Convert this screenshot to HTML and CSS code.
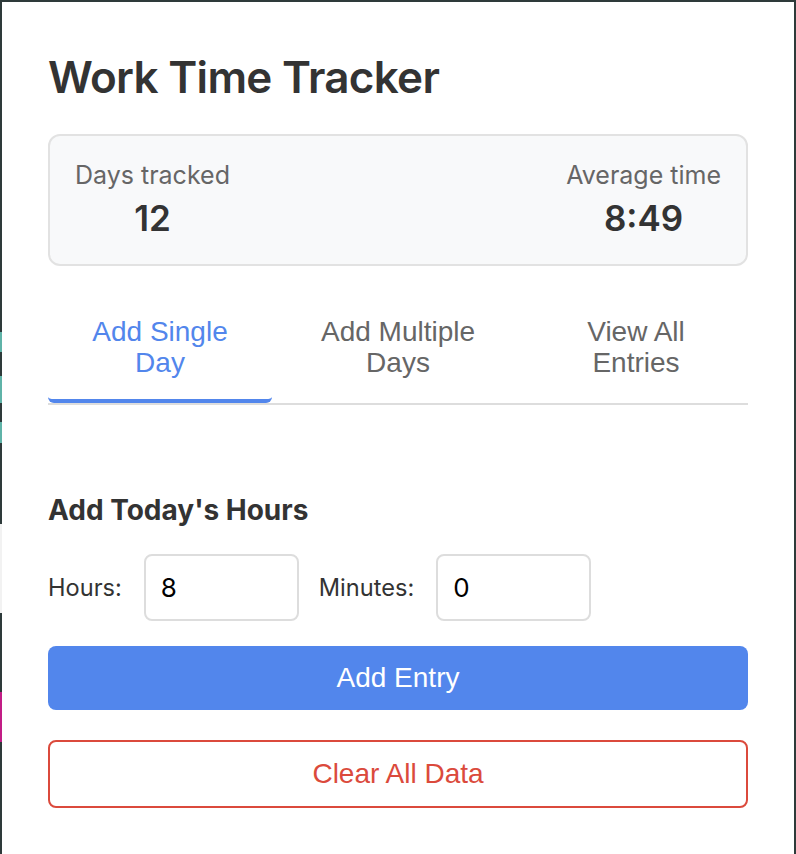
FILE: index.html
```html
<!DOCTYPE html>
<html lang="en">
<head>
  <meta charset="UTF-8" />
  <meta name="viewport" content="width=device-width, initial-scale=1.0"/>
  <title>Work Time Tracker</title>
  <link rel="stylesheet" href="styles.css">
</head>
<body>
  <div class="window">
    <div class="container">
      <h1>Work Time Tracker</h1>

      <div class="stats">
        <div class="stat">
          <div class="stat-label">Days tracked</div>
          <div class="stat-value" id="days">12</div>
        </div>
        <div class="stat">
          <div class="stat-label">Average time</div>
          <div class="stat-value" id="average">8:49</div>
        </div>
      </div>

      <div class="tabs">
        <button class="tab active">Add Single Day</button>
        <button class="tab">Add Multiple Days</button>
        <button class="tab">View All Entries</button>
      </div>

      <h2>Add Today's Hours</h2>

      <div class="time-row">
        <label for="hours">Hours:</label>
        <input type="number" id="hours" value="8"/>
        <label for="minutes">Minutes:</label>
        <input type="number" id="minutes" value="0"/>
      </div>

      <button class="btn-primary">Add Entry</button>
      <button class="btn-danger">Clear All Data</button>
    </div>
  </div>
</body>
</html>
```

FILE: styles.css
```css
body {
  margin: 0;
  background: #fff;
  font-family: Inter, "Noto Sans", sans-serif;
  color: #333;
}
.window {
  min-height: 852px;
  border-top: 2px solid #2e3a3a;
  border-right: 2px solid #2e3a3a;
  padding-left: 2px;
  background: linear-gradient(to bottom,
    #2e3a3a 0, #2e3a3a 330px,
    #5fb3a8 330px, #5fb3a8 350px,
    #2e3a3a 350px, #2e3a3a 374px,
    #5fb3a8 374px, #5fb3a8 401px,
    #2e3a3a 401px, #2e3a3a 420px,
    #5fb3a8 420px, #5fb3a8 441px,
    #2e3a3a 441px, #2e3a3a 522px,
    #f2f2f2 522px, #f2f2f2 611px,
    #2e3a3a 611px, #2e3a3a 690px,
    #c21d86 690px, #c21d86 740px,
    #2e3a3a 740px) no-repeat left top / 2px 100%;
}
.container {
  background: #fff;
  padding: 46px 46px 0;
}
h1 {
  margin: 0 0 28px;
  font-size: 44px;
  font-weight: 600;
  line-height: 58px;
  letter-spacing: -0.7px;
  color: #333;
}
.stats {
  display: flex;
  justify-content: space-between;
  background: #f8f9fa;
  border: 2px solid #e2e2e2;
  border-radius: 12px;
  padding: 25px 25px 25px;
  margin-bottom: 33px;
}
.stat {
  text-align: center;
}
.stat-label {
  font-size: 25px;
  line-height: 29px;
  color: #666;
}
.stat-value {
  margin-top: 8px;
  font-size: 35px;
  line-height: 41px;
  font-weight: 600;
  color: #333;
}
.tabs {
  display: flex;
  gap: 14px;
  border-bottom: 2px solid #ddd;
}
.tab {
  flex: 1;
  background: none;
  border: none;
  border-bottom: 4px solid transparent;
  border-radius: 6px;
  padding: 17px 24px 21px;
  font-family: "Liberation Sans", Arial, sans-serif;
  font-size: 28px;
  line-height: 31px;
  color: #666;
}
.tab.active {
  color: #5286ec;
  border-bottom-color: #5286ec;
}
h2 {
  margin: 89px 0 28px;
  font-size: 28px;
  line-height: 32px;
  font-weight: 700;
  color: #333;
}
.time-row {
  display: flex;
  align-items: center;
}
.time-row label {
  font-size: 23.6px;
  color: #333;
  margin-right: 22px;
}
.time-row input {
  box-sizing: border-box;
  width: 155px;
  height: 67px;
  border: 2px solid #ddd;
  border-radius: 8px;
  padding: 0 15px;
  font-family: Inter, sans-serif;
  font-size: 26px;
  color: #000;
  margin-right: 20px;
}
.btn-primary, .btn-danger {
  display: block;
  width: 100%;
  border-radius: 8px;
  font-family: "Liberation Sans", Arial, sans-serif;
  font-size: 28px;
}
.btn-primary {
  margin-top: 25px;
  height: 64px;
  border: none;
  background: #5286ec;
  color: #fff;
}
.btn-danger {
  margin-top: 30px;
  height: 68px;
  border: 2px solid #db4a3c;
  background: #fff;
  color: #db4a3c;
}
```
